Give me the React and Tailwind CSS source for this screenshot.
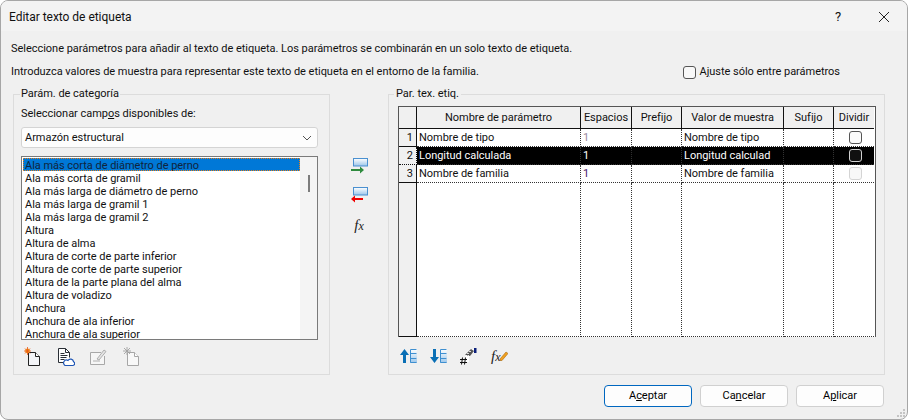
const F = '[font-family:"Roboto","Noto_Sans",sans-serif]';

const items = [
  "Ala más corta de gramil",
  "Ala más larga de diámetro de perno",
  "Ala más larga de gramil 1",
  "Ala más larga de gramil 2",
  "Altura",
  "Altura de alma",
  "Altura de corte de parte inferior",
  "Altura de corte de parte superior",
  "Altura de la parte plana del alma",
  "Altura de voladizo",
  "Anchura",
  "Anchura de ala inferior",
  "Anchura de ala superior",
];

const Grad = ({ id }) => (
  <linearGradient id={id} x1="0" y1="0" x2="0" y2="1">
    <stop offset="0" stopColor="#ffffff" />
    <stop offset="1" stopColor="#9cc6ea" />
  </linearGradient>
);

function AddIcon() {
  return (
    <svg width="18" height="16" viewBox="0 0 18 16" className="block">
      <defs><Grad id="a1" /></defs>
      <rect x="3.5" y="0.5" width="14" height="7.5" fill="url(#a1)" stroke="#4a90d0" />
      <path d="M1 11h9V8.5l4 3.5-4 3.5V13H1z" fill="#2e8b3e" />
    </svg>
  );
}
function RemoveIcon() {
  return (
    <svg width="18" height="16" viewBox="0 0 18 16" className="block">
      <defs><Grad id="a2" /></defs>
      <rect x="3.5" y="0.5" width="14" height="7.5" fill="url(#a2)" stroke="#4a90d0" />
      <path d="M13 11H5V8.5L1 12l4 3.5V13h8z" fill="#f00000" />
    </svg>
  );
}
function NewDoc() {
  return (
    <svg width="20" height="20" viewBox="0 0 20 20" className="block">
      <path d="M4.5 5.5h7l4 4v9h-11z" fill="#f4f5f8" stroke="#222" />
      <path d="M11.5 5.5v4h4" fill="#fff" stroke="#222" />
      <circle cx="3.5" cy="4" r="2.4" fill="#f6a21e" />
      <path d="M3.5 0v8M0 4h7M1 1.5l5 5M6 1.5l-5 5" stroke="#e8581a" strokeWidth="0.8" />
    </svg>
  );
}
function CloudDoc() {
  return (
    <svg width="20" height="20" viewBox="0 0 20 20" className="block">
      <path d="M10 15.5H3.5v-14h7l4 4v5" fill="#fff" stroke="#2a2f36" />
      <path d="M10.5 1.5v4h4" fill="none" stroke="#2a2f36" />
      <path d="M5.5 6.5h4M5.5 8.5h7M5.5 10.5h6M5.5 12.5h4" stroke="#2a2f36" />
      <path d="M10 18.5h8a2 2 0 0 0 .5-3.8 3 3 0 0 0-5.5-1.2 2.6 2.6 0 0 0-3 5z" fill="#fff" stroke="#1f56b5" strokeWidth="1.2" />
    </svg>
  );
}
function EditBox() {
  return (
    <svg width="20" height="20" viewBox="0 0 20 20" className="block">
      <path d="M15.5 9v8.5H1.5V5.5H12" fill="#f6f6f6" stroke="#a8a8a8" />
      <path d="M8 12l7-9 2 1.5-7 8.5z" fill="#e4e4e4" stroke="#a0a0a0" strokeWidth="0.8" />
      <path d="M4 14h7" stroke="#b0b0b0" />
    </svg>
  );
}
function DelDoc() {
  return (
    <svg width="20" height="20" viewBox="0 0 20 20" className="block">
      <path d="M4.5 5.5h7l4 4v9h-11z" fill="#f8f8f8" stroke="#a6a6a6" />
      <path d="M11.5 5.5v4h4" fill="#fff" stroke="#a6a6a6" />
      <path d="M1 1l6 6M7 1l-6 6M4 0v8M0 4h8" stroke="#a0a0a0" strokeWidth="0.9" />
    </svg>
  );
}
function MoveIcon({ down }) {
  const id = down ? "m2" : "m1";
  return (
    <svg width="17" height="14" viewBox="0 0 17 14" className="block">
      <defs><Grad id={id} /></defs>
      <path
        d={down ? "M3 0h3v8h3l-4.5 6L0 8h3z" : "M4.5 0L9 6H6v8H3V6H0z"}
        fill="#0a6fb5"
      />
      <path d="M10 0h7v4h-5.5v1H17v4h-5.5v1H17v4h-7z" fill={`url(#${id})`} />
      <path d="M16.5 0.5h-6v13h6M10.5 4.5h6M10.5 9.5h6" fill="none" stroke="#3e8fd0" />
    </svg>
  );
}
function HashIcon() {
  return (
    <svg width="18" height="18" viewBox="0 0 18 18" className="block">
      <path d="M5 15V8l6-6h5v4h-4l-3 4v5z" fill="#fff" />
      <path d="M5 8l6-6 3 2-4 5z" fill="#555" />
      <path d="M6 8l1 1M8 6l1 1M10 4l1 1M7 6l1 1M9 4l1 1M8 8l1 1" stroke="#fff" strokeWidth="0.8" />
      <rect x="14" y="1" width="2.5" height="5" fill="#0a1f7a" />
      <path d="M2.5 10.5l-1 7M5.5 10.5l-1 7M0 12.5h7M0 15.5h7" stroke="#111" strokeWidth="1" />
    </svg>
  );
}
const Fx = () => (
  <span className="font-['Liberation_Serif',serif] text-[15px] italic leading-[16px] text-[#222]">
    f<span className="text-[12px]">x</span>
  </span>
);

const Cell = ({ className = "", children }) => (
  <div className={`flex items-center overflow-hidden whitespace-nowrap border-r border-b border-dotted border-[#333] pl-[2px] ${className}`}>
    {children}
  </div>
);
const Head = ({ children, last }) => (
  <div className={`flex items-center justify-center overflow-hidden whitespace-nowrap border-b border-[#111] bg-[#f0f0f0] ${last ? "" : "border-r"}`}>
    {children}
  </div>
);
const Num = ({ children, className = "" }) => (
  <div className={`flex items-center justify-end border-r border-b border-[#111] bg-[#f0f0f0] pr-[3px] ${className}`}>
    {children}
  </div>
);
const Check = ({ dark, faint }) => (
  <div
    className={`h-[13px] w-[13px] rounded-[3px] border ${
      dark ? "border-[#d0d0d0] bg-[#111]" : faint ? "border-[#d4d4d4] bg-[#f8f8f8]" : "border-[#555] bg-[#fbfbfb]"
    }`}
  />
);
const Btn = ({ children, primary }) => (
  <button
    className={`flex h-[22px] w-[88px] items-center justify-center rounded-[4px] bg-[#fdfdfd] text-[11px] text-black border ${
      primary ? "border-[#0067c0]" : "border-[#d0d0d0]"
    }`}
  >
    {children}
  </button>
);

export default function App() {
  return (
    <div className={`flex h-[420px] w-[908px] flex-col overflow-hidden rounded-[8px] border border-[#a6a6a6] bg-[#f0f0f0] text-[11px] leading-[16px] tracking-[-0.03px] text-[#111] ${F}`}>
      <div className="flex h-[30px] shrink-0 items-center bg-[#f3f3f3] pl-[8px] pt-[1px] text-[12px]">
        <span>Editar texto de etiqueta</span>
        <span className="ml-auto mr-[37px] text-[13px]">?</span>
        <svg width="12" height="12" viewBox="0 0 12 12" className="mr-[17px]">
          <path d="M1 1l10 10M11 1L1 11" stroke="#222" strokeWidth="1" />
        </svg>
      </div>

      <div className="relative flex min-h-0 flex-1 flex-col pl-[10px] pr-[23px]">
        <div className="mt-[10px]">Seleccione parámetros para añadir al texto de etiqueta. Los parámetros se combinarán en un solo texto de etiqueta.</div>
        <div className="mt-[7px] flex items-center justify-between">
          <span>Introduzca valores de muestra para representar este texto de etiqueta en el entorno de la familia.</span>
          <label className="mr-[44px] flex items-center gap-[3px]">
            <span className="h-[13px] w-[13px] rounded-[3px] border border-[#555] bg-[#f8f8f8]" />
            <span>A<u>j</u>uste sólo entre parámetros</span>
          </label>
        </div>

        <div className="mt-[6px] flex">
          <fieldset className="ml-[2px] h-[289px] w-[317px] shrink-0 border border-[#dcdcdc] pl-[7px] pr-[11px]">
            <legend className="-ml-[1px] px-[1px]">Parám. de categoría</legend>
            <div className="mt-[4px]">Seleccionar camp<u>o</u>s disponibles de:</div>
            <div className="mt-[5px] flex h-[21px] items-center justify-between rounded-[3px] border border-[#d4d4d4] bg-[#fdfdfd] pl-[3px] pr-[5px]">
              <span>Armazón estructural</span>
              <svg width="10" height="6" viewBox="0 0 10 6">
                <path d="M1 1l4 4 4-4" fill="none" stroke="#555" />
              </svg>
            </div>
            <div className="mt-[8px] flex h-[184px] overflow-hidden border border-[#7a7a7a] bg-white">
              <div className="min-w-0 flex-1 overflow-hidden pl-[1px] pt-[1px]">
                <div className="h-[13px] whitespace-nowrap border border-dotted border-[#e8801a] bg-[#0078d7] pl-[1px] leading-[13px] text-[#10243c]">
                  Ala más corta de diámetro de perno
                </div>
                {items.map((t) => (
                  <div key={t} className="h-[13px] whitespace-nowrap pl-[2px] leading-[15px]">
                    {t}
                  </div>
                ))}
              </div>
              <div className="flex w-[17px] shrink-0 justify-center bg-[#f4f4f4] pt-[18px]">
                <div className="ml-[1px] h-[17px] w-[2px] bg-[#7c7c7c]" />
              </div>
            </div>
            <div className="mt-[7px] flex gap-[14px] pl-[3px]">
              <div className="-mr-[3px]"><NewDoc /></div>
              <CloudDoc />
              <EditBox />
              <DelDoc />
            </div>
          </fieldset>

          <div className="flex w-[58px] shrink-0 flex-col items-center pt-[72px]">
            <AddIcon />
            <div className="mt-[13px]"><RemoveIcon /></div>
            <div className="mt-[14px]"><Fx /></div>
          </div>

          <fieldset className="h-[289px] w-[497px] shrink-0 border border-[#dcdcdc] pl-[9px]">
            <legend className="-ml-[4px] px-[2px]">Par. tex. etiq.</legend>
            <div className="mt-[4px] grid h-[231px] w-[478px] grid-cols-[18px_164px_51px_50px_102px_50px_40px] grid-rows-[22px_18px_18px_18px_1fr] border-t border-l border-r border-[#555] bg-white">
              <Head />
              <Head>Nombre de parámetro</Head>
              <Head>Espacios</Head>
              <Head>Prefijo</Head>
              <Head>Valor de muestra</Head>
              <Head>Sufijo</Head>
              <Head last>Dividir</Head>

              <Num>1</Num>
              <Cell>Nombre de tipo</Cell>
              <Cell className="text-[#9a8aa0]">1</Cell>
              <Cell />
              <Cell>Nombre de tipo</Cell>
              <Cell />
              <Cell className="justify-center border-r-0 pl-0"><Check /></Cell>

              <Num className="border-dotted">2</Num>
              <Cell className="bg-black text-white">Longitud calculada</Cell>
              <Cell className="bg-black text-white">1</Cell>
              <Cell className="bg-black" />
              <Cell className="bg-black text-white">Longitud calculad</Cell>
              <Cell className="bg-black" />
              <Cell className="justify-center border-r-0 bg-black pl-0"><Check dark /></Cell>

              <Num>3</Num>
              <Cell>Nombre de familia</Cell>
              <Cell className="text-[#4a1a6a]">1</Cell>
              <Cell />
              <Cell>Nombre de familia</Cell>
              <Cell />
              <Cell className="justify-center border-r-0 pl-0"><Check faint /></Cell>

              <div className="border-r border-b border-[#111] bg-[#f0f0f0]" />
              <Cell />
              <Cell />
              <Cell />
              <Cell />
              <Cell />
              <Cell className="border-r-0" />
            </div>
            <div className="mt-[10px] flex items-center gap-[13px] pl-[2px]">
              <MoveIcon />
              <MoveIcon down />
              <HashIcon />
              <div className="flex items-center">
                <Fx />
                <svg width="9" height="10" viewBox="0 0 9 10" className="-ml-[1px] block">
                  <path d="M1 8l6-7 2 1.5-6 7H1z" fill="#f0a020" stroke="#a86a10" strokeWidth="0.6" />
                </svg>
              </div>
            </div>
          </fieldset>
        </div>

        <div className="mt-[10px] flex justify-end gap-[8px]">
          <Btn primary>A<u>c</u>eptar</Btn>
          <Btn>Ca<u>n</u>celar</Btn>
          <Btn>A<u>p</u>licar</Btn>
        </div>
        <svg width="10" height="10" viewBox="0 0 10 10" className="absolute bottom-[1px] right-[1px]">
          <path d="M7 1h2v2H7zM4 4h2v2H4zM7 4h2v2H7zM1 7h2v2H1zM4 7h2v2H4zM7 7h2v2H7z" fill="#c4c4c4" />
        </svg>
      </div>
    </div>
  );
}
